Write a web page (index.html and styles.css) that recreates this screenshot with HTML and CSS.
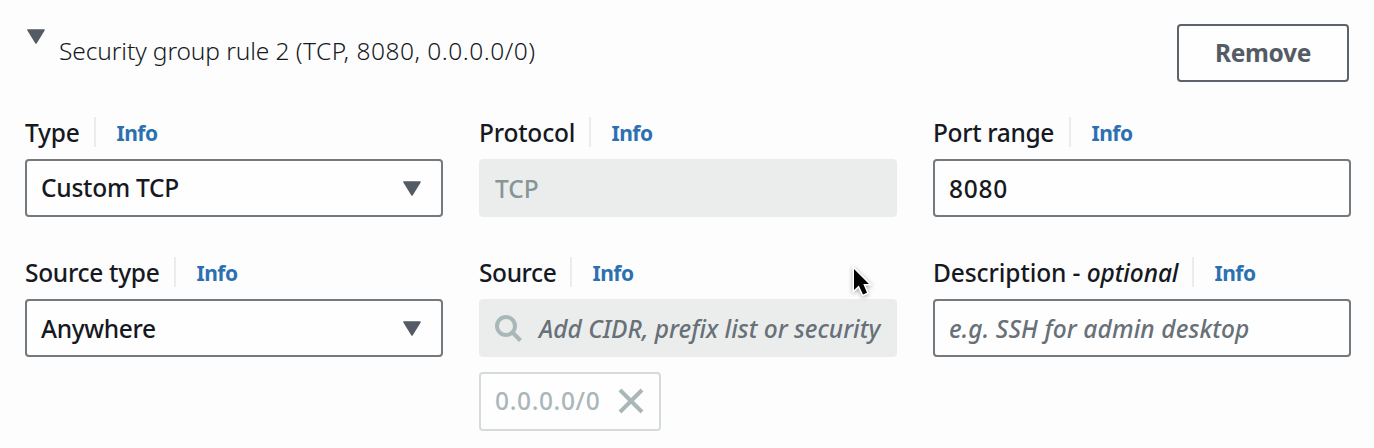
FILE: index.html
```
<!DOCTYPE html>
<html lang="en">
<head>
<meta charset="utf-8">
<title>Security group rule</title>
<link rel="stylesheet" href="styles.css">
</head>
<body>
<main class="rule">
  <header class="rule-header">
    <div class="rule-toggle">
      <svg class="caret" width="18" height="15" viewBox="0 0 18 15"><path d="M1 1H17L9 14Z"/></svg>
      <span class="rule-title">Security group rule 2 <span class="rule-summary">(TCP, 8080, 0.0.0.0/0)</span></span>
    </div>
    <button class="remove"><span>Remove</span></button>
  </header>
  <section class="fields">
    <div class="field">
      <div class="label"><span class="label-text t-type">Type</span><a class="info">Info</a></div>
      <div class="control select"><span class="v-custom">Custom TCP</span><svg class="caret" width="18" height="15" viewBox="0 0 18 15"><path d="M1 1H17L9 14Z"/></svg></div>
    </div>
    <div class="field">
      <div class="label"><span class="label-text t-protocol">Protocol</span><a class="info">Info</a></div>
      <div class="control disabled"><span class="v-tcp">TCP</span></div>
    </div>
    <div class="field">
      <div class="label"><span class="label-text t-port">Port range</span><a class="info">Info</a></div>
      <div class="control"><span class="v-port">8080</span></div>
    </div>
    <div class="field">
      <div class="label"><span class="label-text t-srctype">Source type</span><a class="info">Info</a></div>
      <div class="control select"><span class="v-any">Anywhere</span><svg class="caret" width="18" height="15" viewBox="0 0 18 15"><path d="M1 1H17L9 14Z"/></svg></div>
    </div>
    <div class="field">
      <div class="label"><span class="label-text t-source">Source</span><a class="info">Info</a></div>
      <div class="control disabled search"><svg class="magnifier" width="28" height="28" viewBox="0 0 28 28"><circle cx="11" cy="12" r="9"/><path d="M17.500 18.500L25.500 26.500"/></svg><span class="placeholder v-cidr">Add CIDR, prefix list or security</span></div>
      <div class="token"><span class="v-token">0.0.0.0/0</span><svg class="close" width="26" height="26" viewBox="0 0 26 26"><path d="M2 2L24 24M24 2L2 24"/></svg></div>
    </div>
    <div class="field">
      <div class="label"><span class="label-text t-desc">Description - <em>optional</em></span><a class="info">Info</a></div>
      <div class="control"><span class="placeholder v-desc">e.g. SSH for admin desktop</span></div>
    </div>
  </section>
</main>
<svg class="pointer" width="26" height="34" viewBox="0 0 26 34"><path d="M4 4V25L8.800 20.500L13 29.500L17 27.700L13.300 19H19Z"/></svg>
</body>
</html>
```
FILE: styles.css
```
* { box-sizing: border-box; }
body {
  margin: 0;
  height: 448px;
  overflow: hidden;
  background: #fdfdfd;
  color: #16191f;
  font: 500 24.5px/30px "Noto Sans", "Open Sans", sans-serif;
  white-space: nowrap;
}
.rule { padding: 24px 23px 0 25px; }
.rule-header {
  display: flex;
  justify-content: space-between;
  align-items: flex-start;
  height: 93px;
  padding-right: 2px;
}
.rule-toggle { display: flex; gap: 14px; padding: 5px 0 0 2px; }
.caret { display: block; flex: none; fill: #545b64; stroke: #545b64; stroke-width: 1.5; stroke-linejoin: round; }
.rule-title { padding-top: 7px; font-weight: 300; letter-spacing: -.1px; }
.rule-summary { letter-spacing: .5px; }
.remove {
  width: 172px;
  height: 58px;
  padding: 0;
  border: 2px solid #5c636b;
  border-radius: 4px;
  background: #fefefe;
  color: #545b64;
  font: 700 24.5px/30px "Noto Sans", "Open Sans", sans-serif;
  letter-spacing: -.3px;
}
.fields { display: grid; grid-template-columns: repeat(3, 418px); column-gap: 36px; row-gap: 40px; }
.label { display: flex; height: 30px; margin-bottom: 12px; }
.label-text { line-height: 31px; border-right: 2px solid #eaeded; letter-spacing: -.2px; }
.t-type { width: 71px; }
.t-protocol { width: 112px; }
.t-port { width: 138px; letter-spacing: -.35px; }
.t-srctype { width: 151px; letter-spacing: -.3px; }
.t-source { width: 93px; letter-spacing: -.4px; }
.t-desc { width: 261px; letter-spacing: -.1px; }
.info { padding: 1px 0 0 20.5px; color: #2b70b1; font-size: 21px; font-weight: 700; letter-spacing: -.5px; }
.control {
  display: flex;
  align-items: center;
  height: 58px;
  padding: 0 14px;
  border: 2px solid #72797f;
  border-radius: 4px;
  background: #fefefe;
}
.v-custom { letter-spacing: -.25px; }
.v-any { padding-top: 1px; letter-spacing: -.35px; }
.v-port { padding-top: 2px; letter-spacing: .7px; }
.v-tcp { padding-top: 2px; }
.select { justify-content: space-between; padding-right: 20px; }
.disabled { border-color: #ebeded; background: #ebeded; color: #879596; }
.placeholder { padding-top: 2px; color: #687078; font-style: italic; }
.v-desc { letter-spacing: .1px; }
.search { gap: 16px; }
.magnifier { flex: none; fill: none; stroke: #aab7b8; stroke-width: 4; }
.token {
  display: flex;
  align-items: center;
  gap: 18px;
  width: 182px;
  height: 59px;
  margin-top: 15px;
  padding: 0 14px 2px;
  border: 2px solid #d5dbdb;
  border-radius: 4px;
  background: #fefefe;
  color: #aab7b8;
}
.v-token { letter-spacing: .65px; }
.close { flex: none; stroke: #aab7b8; stroke-width: 4; }
.pointer {
  position: absolute;
  left: 850px;
  top: 265px;
  fill: #000;
  stroke: #fff;
  stroke-width: 3;
  paint-order: stroke;
  filter: drop-shadow(0 1px 2px rgba(0, 0, 0, .35));
}
```
